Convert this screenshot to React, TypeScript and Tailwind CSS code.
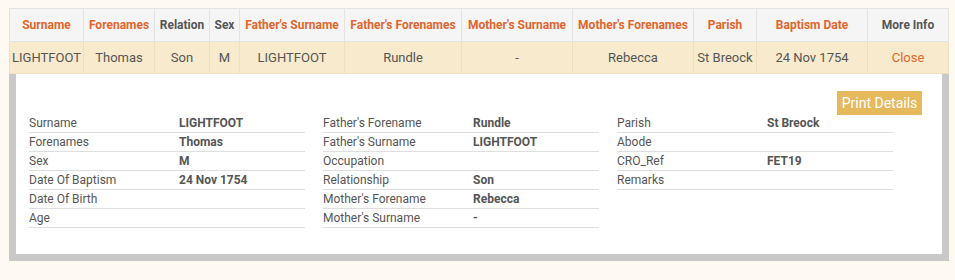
const columns = [
  { label: "Surname", width: 74, sortable: true },
  { label: "Forenames", width: 71, sortable: true },
  { label: "Relation", width: 55, sortable: false },
  { label: "Sex", width: 30, sortable: false },
  { label: "Father's Surname", width: 105, sortable: true },
  { label: "Father's Forenames", width: 117, sortable: true },
  { label: "Mother's Surname", width: 111, sortable: true },
  { label: "Mother's Forenames", width: 121, sortable: true },
  { label: "Parish", width: 63, sortable: true },
  { label: "Baptism Date", width: 111, sortable: true },
  { label: "More Info", width: 81, sortable: false },
];

const row = ["LIGHTFOOT", "Thomas", "Son", "M", "LIGHTFOOT", "Rundle", "-", "Rebecca", "St Breock", "24 Nov 1754"];

const details: [string, string][][] = [
  [
    ["Surname", "LIGHTFOOT"],
    ["Forenames", "Thomas"],
    ["Sex", "M"],
    ["Date Of Baptism", "24 Nov 1754"],
    ["Date Of Birth", ""],
    ["Age", ""],
  ],
  [
    ["Father's Forename", "Rundle"],
    ["Father's Surname", "LIGHTFOOT"],
    ["Occupation", ""],
    ["Relationship", "Son"],
    ["Mother's Forename", "Rebecca"],
    ["Mother's Surname", "-"],
  ],
  [
    ["Parish", "St Breock"],
    ["Abode", ""],
    ["CRO_Ref", "FET19"],
    ["Remarks", ""],
  ],
];

export default function App() {
  return (
    <div className="h-[280px] w-[955px] bg-[#fef9f1] pt-2 pl-[9px] font-['Roboto',sans-serif] text-[#555]">
      <table className="w-[939px] table-fixed border-collapse text-[13px]">
        <colgroup>
          {columns.map(c => (
            <col key={c.label} style={{ width: c.width }} />
          ))}
        </colgroup>
        <thead>
          <tr className="h-[33px] bg-[#f5f5f6]">
            {columns.map(c => (
              <th
                key={c.label}
                className={`border border-[#e3e3e3] p-0 text-center text-[12px] font-bold whitespace-nowrap ${c.sortable ? "text-[#e0662c]" : "text-[#555]"}`}
              >
                {c.label}
              </th>
            ))}
          </tr>
        </thead>
        <tbody>
          <tr className="h-[32px] bg-[#f8eacd]">
            {row.map((v, i) => (
              <td key={i} className="border border-[#eedfc0] p-0 text-center whitespace-nowrap">
                {v}
              </td>
            ))}
            <td className="border border-[#eedfc0] p-0 text-center text-[#e0662c]">Close</td>
          </tr>
        </tbody>
      </table>

      <div className="h-[187px] w-[940px] border-x-[7px] border-b-[7px] border-[#c9c9c9] bg-white">
        <div className="flex justify-end pt-[17px] pr-[20px]">
          <button className="h-[24px] w-[85px] bg-[#e5b95c] text-[14px] leading-[24px] text-white">
            Print Details
          </button>
        </div>
        <div className="-mt-px flex gap-[18px] pl-[13px] text-[12px]">
          {details.map((col, ci) => (
            <div key={ci} className="w-[276px]">
              {col.map(([k, v]) => (
                <div key={k} className="flex h-[19px] border-b border-[#dedede] leading-[18px]">
                  <span className="w-[150px] shrink-0">{k}</span>
                  <span className="font-bold">{v}</span>
                </div>
              ))}
            </div>
          ))}
        </div>
      </div>
    </div>
  );
}
